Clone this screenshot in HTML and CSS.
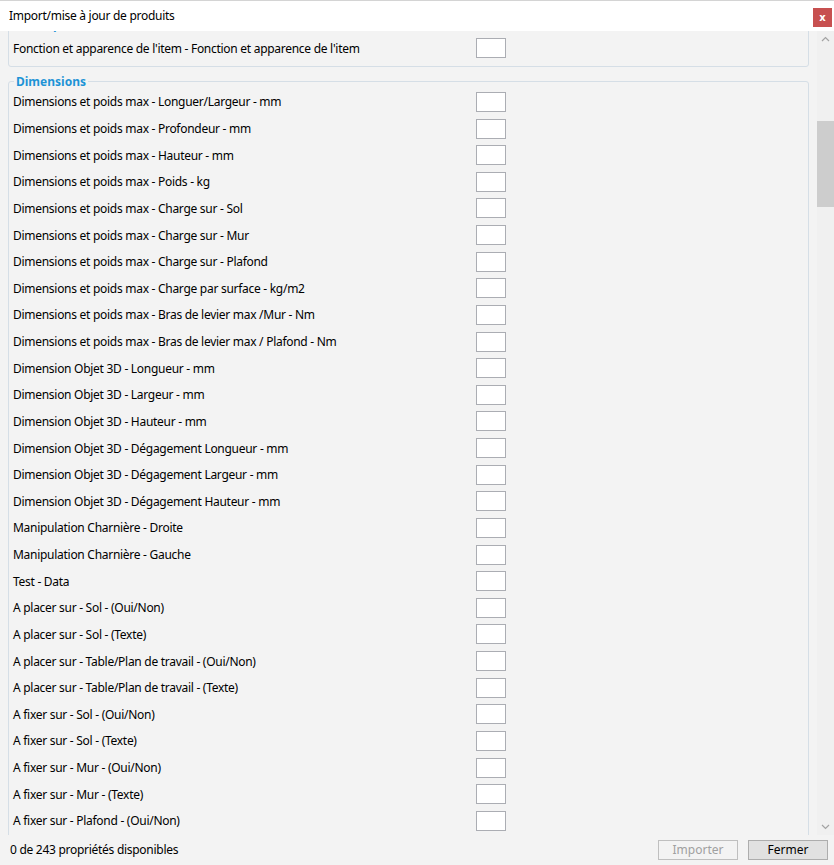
FILE: index.html
```html
<!DOCTYPE html>
<html>
<head>
    <meta charset="UTF-8">
    <title>Import/mise à jour de produits</title>
    <link rel="stylesheet" href="styles.css">
</head>
<body>
    <div class="window">
        <div class="titlebar">
            <span class="title">Import/mise à jour de produits</span>
            <button class="close-btn">x</button>
        </div>
        <div class="main">
            <div class="scroll-view">
                <div class="scroll-content">
                    <fieldset class="group group-first">
                        <legend>Description</legend>
                        <div class="prop-row"><span class="prop-name">Fonction et apparence de l'item - Fonction et apparence de l'item</span><span class="check"></span></div>
                    </fieldset>
                    <fieldset class="group">
                        <legend>Dimensions</legend>
                        <div class="prop-row"><span class="prop-name">Dimensions et poids max - Longuer/Largeur - mm</span><span class="check"></span></div>
                        <div class="prop-row"><span class="prop-name">Dimensions et poids max - Profondeur - mm</span><span class="check"></span></div>
                        <div class="prop-row"><span class="prop-name">Dimensions et poids max - Hauteur - mm</span><span class="check"></span></div>
                        <div class="prop-row"><span class="prop-name">Dimensions et poids max - Poids - kg</span><span class="check"></span></div>
                        <div class="prop-row"><span class="prop-name">Dimensions et poids max - Charge sur - Sol</span><span class="check"></span></div>
                        <div class="prop-row"><span class="prop-name">Dimensions et poids max - Charge sur - Mur</span><span class="check"></span></div>
                        <div class="prop-row"><span class="prop-name">Dimensions et poids max - Charge sur - Plafond</span><span class="check"></span></div>
                        <div class="prop-row"><span class="prop-name">Dimensions et poids max - Charge par surface - kg/m2</span><span class="check"></span></div>
                        <div class="prop-row"><span class="prop-name">Dimensions et poids max - Bras de levier max /Mur - Nm</span><span class="check"></span></div>
                        <div class="prop-row"><span class="prop-name">Dimensions et poids max - Bras de levier max / Plafond - Nm</span><span class="check"></span></div>
                        <div class="prop-row"><span class="prop-name">Dimension Objet 3D - Longueur - mm</span><span class="check"></span></div>
                        <div class="prop-row"><span class="prop-name">Dimension Objet 3D - Largeur - mm</span><span class="check"></span></div>
                        <div class="prop-row"><span class="prop-name">Dimension Objet 3D - Hauteur - mm</span><span class="check"></span></div>
                        <div class="prop-row"><span class="prop-name">Dimension Objet 3D - Dégagement Longueur - mm</span><span class="check"></span></div>
                        <div class="prop-row"><span class="prop-name">Dimension Objet 3D - Dégagement Largeur - mm</span><span class="check"></span></div>
                        <div class="prop-row"><span class="prop-name">Dimension Objet 3D - Dégagement Hauteur - mm</span><span class="check"></span></div>
                        <div class="prop-row"><span class="prop-name">Manipulation Charnière - Droite</span><span class="check"></span></div>
                        <div class="prop-row"><span class="prop-name">Manipulation Charnière - Gauche</span><span class="check"></span></div>
                        <div class="prop-row"><span class="prop-name">Test - Data</span><span class="check"></span></div>
                        <div class="prop-row"><span class="prop-name">A placer sur - Sol - (Oui/Non)</span><span class="check"></span></div>
                        <div class="prop-row"><span class="prop-name">A placer sur - Sol - (Texte)</span><span class="check"></span></div>
                        <div class="prop-row"><span class="prop-name">A placer sur - Table/Plan de travail - (Oui/Non)</span><span class="check"></span></div>
                        <div class="prop-row"><span class="prop-name">A placer sur - Table/Plan de travail - (Texte)</span><span class="check"></span></div>
                        <div class="prop-row"><span class="prop-name">A fixer sur - Sol - (Oui/Non)</span><span class="check"></span></div>
                        <div class="prop-row"><span class="prop-name">A fixer sur - Sol - (Texte)</span><span class="check"></span></div>
                        <div class="prop-row"><span class="prop-name">A fixer sur - Mur - (Oui/Non)</span><span class="check"></span></div>
                        <div class="prop-row"><span class="prop-name">A fixer sur - Mur - (Texte)</span><span class="check"></span></div>
                        <div class="prop-row"><span class="prop-name">A fixer sur - Plafond - (Oui/Non)</span><span class="check"></span></div>
                    </fieldset>
                </div>
            </div>
            <div class="scrollbar">
                <svg class="arrow" width="17" height="17" viewBox="0 0 17 17"><path d="M5 10 L8.5 6.5 L12 10" fill="none" stroke="#a3a3a3" stroke-width="1.2"/></svg>
                <div class="track">
                    <div class="thumb"></div>
                </div>
                <svg class="arrow" width="17" height="17" viewBox="0 0 17 17"><path d="M5 7 L8.5 10.5 L12 7" fill="none" stroke="#a3a3a3" stroke-width="1.2"/></svg>
            </div>
        </div>
        <div class="footer">
            <span class="status">0 de 243 propriétés disponibles</span>
            <div class="buttons">
                <button class="btn btn-disabled" disabled>Importer</button>
                <button class="btn">Fermer</button>
            </div>
        </div>
    </div>
</body>
</html>
```

FILE: styles.css
```css
        html, body {
            margin: 0;
            padding: 0;
            background-color: #f3f3f3;
        }

        body {
            font-family: "Noto Sans", "Open Sans", sans-serif;
            font-size: 12px;
            letter-spacing: -0.28px;
            color: #000;
        }

        .window {
            width: 834px;
            height: 865px;
            display: flex;
            flex-direction: column;
            overflow: hidden;
        }

        .titlebar {
            height: 30px;
            background: white;
            border-top: 1px solid #d4d4d4;
            display: flex;
            align-items: center;
            justify-content: space-between;
            padding-left: 9px;
            padding-right: 2px;
            flex-shrink: 0;
        }

        .title {
            margin-top: -1px;
        }

        .close-btn {
            width: 19px;
            height: 19px;
            margin-top: 2px;
            border: none;
            padding: 0;
            background-color: #c75050;
            color: white;
            font-family: "DejaVu Sans", sans-serif;
            font-weight: bold;
            font-size: 10px;
            line-height: 17px;
            letter-spacing: 0;
        }

        .main {
            height: 804px;
            display: flex;
            flex-shrink: 0;
        }

        .scroll-view {
            width: 817px;
            overflow: hidden;
        }

        .scroll-content {
            margin-top: -13px;
        }

        .group {
            margin: 0 8px 8px 8px;
            padding: 0 4px 4px 4px;
            border: 1px solid #d5dee6;
            border-radius: 3px;
            width: 791px;
            min-width: 0;
        }

        .group-first {
            padding-top: 3px;
        }

        .group legend {
            color: #1e93d6;
            font-weight: bold;
            line-height: 14px;
            letter-spacing: 0;
            padding: 0 2px;
            margin-left: 1px;
        }

        .prop-row {
            height: 26.63px;
            display: flex;
            align-items: center;
        }

        .prop-name {
            width: 463px;
            white-space: nowrap;
        }

        .check {
            width: 28px;
            height: 18px;
            border: 1px solid #abadb3;
            background: white;
        }

        .scrollbar {
            width: 17px;
            background-color: #f0f0f0;
            display: flex;
            flex-direction: column;
        }

        .arrow {
            display: block;
            flex-shrink: 0;
        }

        .track {
            flex: 1;
            padding-top: 73px;
        }

        .thumb {
            height: 86px;
            background-color: #cdcdcd;
        }

        .footer {
            flex: 1;
            display: flex;
            align-items: center;
            justify-content: space-between;
            padding: 0 6px 0 10px;
        }

        .status {
            margin-top: -2px;
        }

        .buttons {
            display: flex;
            gap: 10px;
            margin-top: -1px;
        }

        .btn {
            width: 80px;
            height: 20px;
            padding: 0;
            font-family: inherit;
            font-size: 12px;
            background-color: #e1e1e1;
            border: 1px solid #adadad;
            color: #000;
        }

        .btn-disabled {
            background-color: #f3f3f3;
            border-color: #bfbfbf;
            color: #a0a0a0;
        }
```
